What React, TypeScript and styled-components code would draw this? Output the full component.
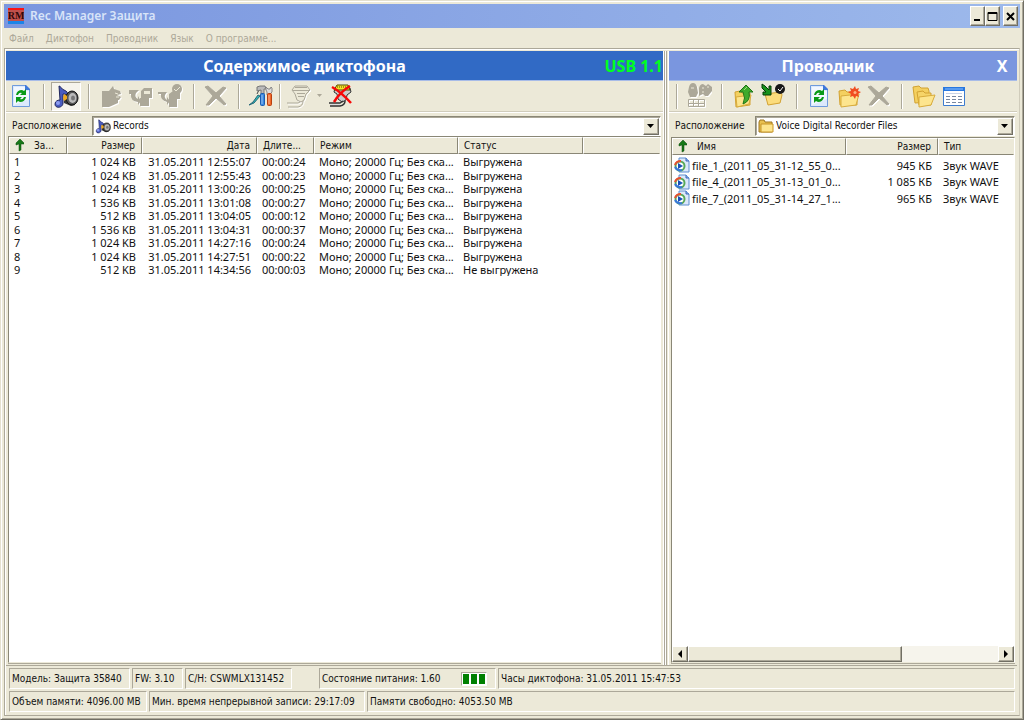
import React from "react";
import styled, { createGlobalStyle, css } from "styled-components";

const face = "#ece9d8";
const shadow = "#aca899";
const dark = "#8a8776";
const ui = '"DejaVu Sans Condensed", "DejaVu Sans", sans-serif';
const heading = '"Noto Sans", sans-serif';

const GlobalStyle = createGlobalStyle`
  *, *::before, *::after { box-sizing: border-box; }
  body { margin: 0; background: ${face}; }
  button, select { font: inherit; color: inherit; margin: 0; padding: 0; border: 0; background: none; }
`;

const raised = css`
  border: 1px solid;
  border-color: #fff #716f64 #716f64 #fff;
  box-shadow: inset -1px -1px 0 ${shadow};
  background: ${face};
`;

const Window = styled.main`
  min-height: 100vh;
  display: flex;
  flex-direction: column;
  background: ${face};
  border: 1px solid;
  border-color: #e4e0cf #716f64 #716f64 #e4e0cf;
  box-shadow: inset 1px 1px 0 #fff, inset -1px -1px 0 ${shadow};
  padding: 3px;
  font: 10px/14px ${ui};
  color: #111;
`;

const TitleBar = styled.header`
  height: 24px;
  flex: none;
  display: flex;
  align-items: center;
  padding: 0 2px 0 4px;
  background: linear-gradient(90deg, #7a96df, #9db9eb);
`;

const Title = styled.h1`
  flex: 1;
  margin: 0 0 0 6px;
  font: 600 12px/20px ${heading};
  color: #d8e4f8;
`;

const WinButton = styled.button<{ $gap?: boolean }>`
  ${raised}
  width: 15px;
  height: 20px;
  margin-left: ${(p) => (p.$gap ? 3 : 0)}px;
  display: grid;
  place-items: center;
  color: #000;
`;

const MenuBar = styled.nav`
  height: 20px;
  flex: none;
  display: flex;
  align-items: center;
  gap: 12px;
  padding: 2px 5px 0;
`;

const MenuItem = styled.button`
  color: ${shadow};
`;

const Body = styled.div`
  flex: 1;
  display: flex;
  flex-direction: column;
  border: 1px solid ${shadow};
  border-right-color: #d0ccbb;
  box-shadow: inset 1px 1px 0 #fff;
  padding: 2px 2px 1px 1px;
`;

const Panes = styled.div`
  flex: 1;
  display: grid;
  grid-template-columns: minmax(0, 657fr) 6px minmax(0, 348fr);
`;

const Splitter = styled.div`
  border: solid #fff;
  border-width: 0 1px;
  background: linear-gradient(90deg, ${shadow} 0 1px, #fff 1px 2px, ${shadow} 2px 3px, ${face} 3px);
`;

const Pane = styled.section`
  display: flex;
  flex-direction: column;
  min-width: 0;
`;

const PaneHeader = styled.div<{ $active?: boolean }>`
  height: 30px;
  flex: none;
  display: grid;
  grid-template-columns: 1fr ${(p) => (p.$active ? 60 : 30)}px;
  align-items: center;
  border-bottom: 1px solid #a8bce8;
  background: ${(p) => (p.$active ? "#316ac5" : "#7a96df")};
  color: #fff;
  font: 700 16px/20px ${heading};
`;

const PaneTitle = styled.h2`
  margin: 0;
  font: inherit;
  text-align: center;
`;

const UsbMode = styled.span`
  justify-self: end;
  white-space: nowrap;
  color: #00ff21;
`;

const PaneClose = styled.button`
  justify-self: center;
`;

const Toolbar = styled.div`
  height: 31px;
  flex: none;
  display: flex;
  align-items: center;
  border-bottom: 1px solid #d0ccbb;
`;

const ToolButton = styled.button<{ $pressed?: boolean; $narrow?: boolean }>`
  width: ${(p) => (p.$narrow ? 12 : 30)}px;
  height: 29px;
  flex: none;
  display: grid;
  place-items: center;
  ${(p) =>
    p.$pressed &&
    css`
      border: 1px solid;
      border-color: ${shadow} #fff #fff ${shadow};
      background: #f6f4ec;
    `}
`;

const Divider = styled.span<{ $narrow?: boolean }>`
  width: 2px;
  height: 25px;
  flex: none;
  margin: 0 ${(p) => (p.$narrow ? 3 : 6)}px 0 ${(p) => (p.$narrow ? 3 : 7)}px;
  border-left: 1px solid ${shadow};
  border-right: 1px solid #fff;
`;

const LocationRow = styled.div`
  height: 24px;
  flex: none;
  display: flex;
  align-items: center;
  padding: 2px 2px 0 6px;
  border-top: 1px solid #fff;
`;

const LocationLabel = styled.label`
  width: 80px;
  flex: none;
`;

const Combo = styled.div`
  flex: 1;
  min-width: 0;
  height: 20px;
  display: grid;
  grid-template-columns: 18px 1fr 16px;
  align-items: center;
  background: #fff;
  border: 1px solid;
  border-color: ${dark} #fff #fff ${dark};
  box-shadow: inset 1px 1px 0 ${shadow};
  padding: 1px;
`;

const ComboSelect = styled.select`
  grid-area: 1 / 1 / 2 / 4;
  appearance: none;
  width: 100%;
  height: 16px;
  padding-left: 19px;
  outline: none;
`;

const ComboIcon = styled.span`
  grid-area: 1 / 1;
  display: grid;
  place-items: center;
  pointer-events: none;
`;

const ComboArrow = styled.span`
  ${raised}
  grid-area: 1 / 3;
  width: 16px;
  height: 17px;
  display: grid;
  place-items: center;
  pointer-events: none;
`;

const ListBox = styled.div<{ $gap?: boolean }>`
  flex: 1;
  margin: ${(p) => (p.$gap ? 1 : 0)}px 2px 2px;
  display: flex;
  flex-direction: column;
  background: #fff;
  border: 1px solid;
  border-color: ${dark} #fff ${face} ${dark};
  box-shadow: 0 1px 0 ${shadow};
`;

const Grid = styled.table`
  width: 100%;
  table-layout: fixed;
  border-collapse: separate;
  border-spacing: 0;
`;

const Th = styled.th<{ $right?: boolean }>`
  height: 17px;
  padding: 0 6px 0 5px;
  background: ${face};
  border: 1px solid;
  border-color: #fff ${dark} ${dark} #fff;
  font-weight: 400;
  line-height: 14px;
  white-space: nowrap;
  text-align: ${(p) => (p.$right ? "right" : "left")};
  &:last-child { border-right-color: ${face}; }
`;

const SortedLabel = styled.span`
  display: flex;
  align-items: center;
  gap: 10px;
`;

const Rows = styled.tbody<{ $files?: boolean }>`
  font: 11px/13px ${heading};
  &::before {
    content: "";
    display: block;
    height: ${(p) => (p.$files ? 2 : 1)}px;
  }
  td { height: ${(p) => (p.$files ? 16 : 13)}px; }
  tr:nth-child(even) td { height: ${(p) => (p.$files ? 17 : 14)}px; }
`;

const Td = styled.td<{ $right?: boolean }>`
  padding: 0 6px 0 5px;
  white-space: nowrap;
  overflow: hidden;
  text-align: ${(p) => (p.$right ? "right" : "left")};
`;

const FileCell = styled(Td)`
  padding: 0 0 0 2px;
`;

const FileName = styled.span`
  display: flex;
  align-items: center;
  gap: 2px;
  height: 16px;
`;

const ScrollBar = styled.div`
  height: 16px;
  margin-top: auto;
  display: flex;
  background: #f6f4ec;
`;

const ScrollButton = styled.button`
  ${raised}
  width: 16px;
  flex: none;
  display: grid;
  place-items: center;
`;

const ScrollTrack = styled.div`
  flex: 1;
  display: flex;
`;

const ScrollThumb = styled.div`
  ${raised}
  width: 69%;
`;

const StatusBar = styled.footer`
  display: flex;
  flex-direction: column;
  gap: 2px;
  border-top: 1px solid ${shadow};
  padding: 2px 2px 2px 3px;
`;

const StatusRow = styled.div`
  display: flex;
  gap: 2px;
  height: 21px;
`;

const StatusCell = styled.div<{ $w?: number; $after?: number }>`
  ${(p) => (p.$w ? `min-width: ${p.$w}px;` : "flex: 1;")}
  margin-right: ${(p) => p.$after ?? 0}px;
  display: flex;
  align-items: center;
  gap: 20px;
  padding: 0 2px;
  white-space: nowrap;
  border: 1px solid;
  border-color: ${shadow} #fff #fff ${shadow};
`;

const Battery = styled.span`
  display: flex;
  gap: 2px;
  padding: 1px;
  background: #fff;
  border: 1px solid;
  border-color: ${shadow} #fff #fff ${shadow};
`;

const BatteryBar = styled.i`
  width: 6px;
  height: 10px;
  background: #008000;
`;

const Svg = ({ children, size = 26 }: { children: React.ReactNode; size?: number }) => (
  <svg width={size} height={size} viewBox="0 0 26 26" aria-hidden="true">
    {children}
  </svg>
);

const Refresh = () => (
  <Svg>
    <path d="M4.500 2.500h13l4 4v17h-17z" fill="#dce9fc" stroke="#6f9bdc" />
    <path d="M6 4h11v4h4v8L6 22z" fill="#f2f7ff" />
    <path d="M17 2h1l4 4v1h-5z" fill="#3f78dc" />
    <path d="M8 12q1-5 6-5l2 1 2-2v6h-6l2-2q-3-1-4 2z" fill="#0a9a18" />
    <path d="M18 14q-1 5-6 5l-2-1-2 2v-6h6l-2 2q3 1 4-2z" fill="#0a9a18" />
  </Svg>
);

const Recorder = ({ size = 26 }: { size?: number }) => (
  <Svg size={size}>
    <path d="M6 3c2 0 2 3 5 4s4 3 4 6c-2-2-4-2-5-2v9c0 5-8 6-8 1 0-3 3-4 5-4z" fill="#4a5cc0" stroke="#20265c" />
    <ellipse cx="5" cy="20" rx="2" ry="2" fill="#8d9cf0" />
    <path d="M11 12l7-3 4 0v13l-4 1-7-3z" fill="#383838" />
    <ellipse cx="19" cy="15" rx="6" ry="7" fill="#555" stroke="#111" />
    <ellipse cx="19.500" cy="15" rx="4" ry="5" fill="#bbb" />
    <ellipse cx="20" cy="15" rx="2" ry="2.500" fill="#777" />
    <path d="M11 11l3 2v3l-3 2-1-3z" fill="#f0a820" />
  </Svg>
);

const gray = "#aca899";

const Emboss = ({ children }: { children: React.ReactNode }) => (
  <Svg>
    <g transform="translate(1 1)" fill="#fff" stroke="#fff">{children}</g>
    <g fill={gray} stroke={gray}>{children}</g>
  </Svg>
);

const Unload = () => (
  <Emboss>
    <path d="M4 8h7l4-5 1 3 6 2 1 3-4 1 4 2-2 3h-1v3l-9 4H4z" strokeWidth="0" />
    <path d="M17 10l3 1M18 14h3" fill="none" stroke={face} />
  </Emboss>
);

const UnloadTo = () => (
  <Emboss>
    <path d="M1 7h10l-3 3q-2 4 2 6v-3l3 5-3 4v-3Q2 18 3 11H1zM13 8l3-3h8v10h-3v8h-9v-8h1z" strokeWidth="0" />
    <path d="M16 8h6v3h-6z" fill={face} stroke="none" />
  </Emboss>
);

const UnloadChecked = () => (
  <Emboss>
    <path d="M0 9h9l-2 3q-1 3 2 5v-3l3 4-3 4v-3q-7-2-6-8H0zM11 11l4-3h7v8h-3v8h-8z" strokeWidth="0" />
    <circle cx="19" cy="6" r="5" strokeWidth="0" />
    <path d="M16 6l2 2 4-4" fill="none" stroke={face} />
  </Emboss>
);

const Cross = () => (
  <Emboss>
    <path d="M2 4l3-1 8 7 7-6 3 1-7 8 7 8-2 1-8-7-7 7H3l7-9z" strokeWidth="1" />
  </Emboss>
);

const Tools = () => (
  <Svg>
    <path d="M1 22l4-3 5-7 2 1-6 7z" fill="#30b8b8" stroke="#286878" />
    <path d="M9 11l2-4" stroke="#444" />
    <path d="M9 4l3-1h5l1 3h-2v5h-3V7l-4 1z" fill="#bbb" stroke="#777" />
    <path d="M18 4l2 2h2l1-2 1 1v4l-2 2v1h-3V9l-1-2z" fill="#ddd" stroke="#888" />
    <rect x="12.500" y="10.500" width="4" height="12" rx="1" fill="#3888e0" stroke="#1c5cb0" />
    <rect x="19.500" y="10.500" width="4" height="12" rx="1" fill="#f06828" stroke="#b84010" />
    <path d="M14 12v9M21 12v9" stroke="#fff" strokeOpacity=".5" />
  </Svg>
);

const PlugShape = () => (
  <>
    <path d="M9 3h12l3 4-4 4-2 6-3 2-4-2-2-6-3-4z" fill={face} strokeWidth="1" />
    <path d="M9 4.500h12M7 7.500h16M11 10.500h8M12 13.500h6" fill="none" strokeWidth="1" />
    <path d="M14 19l-2 1H1M17 18q0 5-5 6H2" fill="none" strokeWidth="1" />
  </>
);

const PlugOff = () => (
  <Svg>
    <g transform="translate(1 1)" stroke="#fff"><PlugShape /></g>
    <g stroke={gray}><PlugShape /></g>
  </Svg>
);

const PlugRemove = () => (
  <Svg>
    <path d="M7 5h15l1 4-4 3-1 5-4 2-4-3-1-5-3-2z" fill="#ccc" stroke="#333" />
    <path d="M9 2h11l2 5H6z" fill="#f4e428" stroke="#554c00" />
    <path d="M9 4h11" stroke="#554c00" strokeDasharray="1 1" />
    <path d="M15 18l-3 2H1M17 18q0 4-5 5H2" fill="none" stroke="#333" strokeWidth="1.500" />
    <path d="M2 21.500h10" stroke="#ddd" />
    <path d="M4 4q9 5 19 16M22 3Q12 9 6 19" fill="none" stroke="#f80808" strokeWidth="2.500" />
  </Svg>
);

const Search = () => (
  <Emboss>
    <path d="M3 4q1-4 4-4t4 4l1 6-2 4H4L2 9zM13 5q1-4 4-4l3 2 2-2 4 3v4l-4 5h-3l-2-2-4 2z" strokeWidth="0" />
    <path d="M5 5h3M16 5h2M21 4h2M16 9h2" fill="none" stroke={face} />
    <path d="M2.500 16.500h16v7h-16zM2 20.500h17M7.500 16v7M12.500 16v7" fill="none" />
  </Emboss>
);

const folderBack = "#f4d060";
const FolderShape = () => (
  <>
    <path d="M3 8l6-1 2 2h9l1 3v10H4z" fill={folderBack} stroke="#d2a232" />
    <path d="M5 13l18-2-3 11-15 2z" fill="#fde58e" stroke="#d8ac3c" />
  </>
);

const FolderUp = () => (
  <Svg>
    <path d="M4 9l5-1 2 2h8v12l-14 2z" fill={folderBack} stroke="#d2a232" />
    <path d="M5 14l15-2-2 9-12 3z" fill="#fde58e" stroke="#d8ac3c" />
    <path d="M8 9l7-7 7 7h-4q2 9-6 12 3-6 0-12z" fill="#3faa2c" stroke="#1c7416" />
    <path d="M13 7l3-3" stroke="#9be078" />
  </Svg>
);

const FolderMark = () => (
  <Svg>
    <path d="M4 11l16-2 1 3-2 8-12 2z" fill="#fbdc7c" stroke="#d2a232" />
    <path d="M1 1l3 2 4 4V3h2v9H2V9h3L1 5z" fill="#18921c" stroke="#063c06" />
    <circle cx="19" cy="6" r="5" fill="#181818" />
    <path d="M17 6l2 2 3-4" fill="none" stroke="#fff" />
  </Svg>
);

const FolderNew = () => (
  <Svg>
    <FolderShape />
    <path d="M19 3l1 3 3-1-1 3 3 1-3 2 1 3-3-1-1 3-2-3-3 1 1-3-3-2 3-1-1-3 3 1z" fill="#f04c20" />
    <circle cx="19" cy="9.500" r="1.500" fill="#ffb080" />
  </Svg>
);

const FolderOpen = () => (
  <Svg>
    <path d="M2 4l6-1 2 2h7l1 3v11l-14 1z" fill={folderBack} stroke="#d2a232" />
    <path d="M6 9l6-1 2 2h6v12H8z" fill="#f6d468" stroke="#d2a232" />
    <path d="M8 14l16-2-4 10-12 2z" fill="#fde58e" stroke="#d8ac3c" />
  </Svg>
);

const ListView = () => (
  <Svg>
    <path d="M2.500 4.500h21v18h-21z" fill="#fff" stroke="#3c7cd0" />
    <path d="M2 4h22v4H2z" fill="#2878e0" />
    <path d="M4 6h18" stroke="#8cc0ff" />
    <path d="M5 10.500h16" stroke="#c8d4e8" />
    <path d="M5 13.500h4M11 13.500h4M17 13.500h4M5 16.500h4M11 16.500h4M17 16.500h4M5 19.500h4M11 19.500h4M17 19.500h4" stroke="#7888a0" />
  </Svg>
);

const Folder = () => (
  <svg width="16" height="16" viewBox="0 0 16 16" aria-hidden="true">
    <path d="M1 4l1-2h4l1 2h7v10H1z" fill="#e8c050" stroke="#9c7420" />
    <path d="M3 6h12v8H3z" fill="#fde58e" stroke="#c89628" />
  </svg>
);

const WaveFile = () => (
  <svg width="16" height="16" viewBox="0 0 16 16" aria-hidden="true">
    <path d="M5 1h7l3 3v11H5z" fill="#dce8fa" stroke="#5f8fd0" />
    <path d="M12 1v3h3" fill="#8fb4ec" stroke="#3c68b8" />
    <circle cx="6" cy="9" r="4.500" fill="#fff" stroke="#58a858" strokeWidth="2" />
    <path d="M1 8q1-4 6-4" fill="none" stroke="#e85030" strokeWidth="2" />
    <path d="M1 10q2 4 7 3" fill="none" stroke="#3878d8" strokeWidth="2" />
    <path d="M4 6l5 3-5 3z" fill="#1850b8" />
  </svg>
);

const SortArrow = () => (
  <svg width="9" height="13" viewBox="0 0 9 13" aria-hidden="true">
    <path d="M5 0l4 4v1H6v6l-2 1V5L1 6V4z" fill="#187818" stroke="#084808" strokeWidth=".5" />
  </svg>
);

const Caret = ({ d, color = "#000" }: { d: string; color?: string }) => (
  <svg width="8" height="8" viewBox="0 0 8 8" aria-hidden="true">
    <path d={d} fill={color} />
  </svg>
);

const down = "M0 2h7L3.500 6z";

const Logo = () => (
  <svg width="16" height="16" viewBox="0 0 16 16" aria-hidden="true">
    <path fill="#c0504c" d="M0 2h16v11H0z" />
    <path fill="#f81414" d="M0 0h16v2H0z" />
    <path fill="#1c84e8" d="M0 13h16v3H0z" />
    <text x="8" y="11" fontSize="10" fontWeight="700" fontFamily="Liberation Serif, serif" textAnchor="middle" fill="#300808">RM</text>
  </svg>
);

const records = [
  ["1", "1 024 KB", "31.05.2011 12:55:07", "00:00:24", "Выгружена"],
  ["2", "1 024 KB", "31.05.2011 12:55:43", "00:00:23", "Выгружена"],
  ["3", "1 024 KB", "31.05.2011 13:00:26", "00:00:25", "Выгружена"],
  ["4", "1 536 KB", "31.05.2011 13:01:08", "00:00:27", "Выгружена"],
  ["5", "512 KB", "31.05.2011 13:04:05", "00:00:12", "Выгружена"],
  ["6", "1 536 KB", "31.05.2011 13:04:31", "00:00:37", "Выгружена"],
  ["7", "1 024 KB", "31.05.2011 14:27:16", "00:00:24", "Выгружена"],
  ["8", "1 024 KB", "31.05.2011 14:27:51", "00:00:22", "Выгружена"],
  ["9", "512 KB", "31.05.2011 14:34:56", "00:00:03", "Не выгружена"],
];

const files = [
  ["file_1_(2011_05_31-12_55_0...", "945 КБ"],
  ["file_4_(2011_05_31-13_01_0...", "1 085 КБ"],
  ["file_7_(2011_05_31-14_27_1...", "965 КБ"],
];

const Cols = ({ widths }: { widths: number[] }) => (
  <colgroup>
    {widths.map((w, i) => (
      <col key={i} width={w || undefined} />
    ))}
  </colgroup>
);

export default function App() {
  return (
    <>
      <GlobalStyle />
      <Window>
        <TitleBar>
          <Logo />
          <Title>Rec Manager Защита</Title>
          <WinButton aria-label="Свернуть">
            <svg width="9" height="11"><path d="M1 8h6v2H1z" /></svg>
          </WinButton>
          <WinButton aria-label="Развернуть">
            <svg width="11" height="11"><path d="M1 1.500h9v8H1z" fill="none" stroke="#000" /><path d="M1 1h9v2H1z" /></svg>
          </WinButton>
          <WinButton aria-label="Закрыть" $gap>
            <svg width="9" height="9"><path d="M1 1l7 7M8 1l-7 7" stroke="#000" strokeWidth="2" /></svg>
          </WinButton>
        </TitleBar>
        <MenuBar>
          {["Файл", "Диктофон", "Проводник", "Язык", "О программе..."].map((m) => (
            <MenuItem key={m} disabled>{m}</MenuItem>
          ))}
        </MenuBar>
        <Body>
          <Panes>
            <Pane>
              <PaneHeader $active>
                <PaneTitle>Содержимое диктофона</PaneTitle>
                <UsbMode>USB 1.1</UsbMode>
              </PaneHeader>
              <Toolbar>
                <ToolButton aria-label="Обновить"><Refresh /></ToolButton>
                <Divider />
                <ToolButton aria-label="Диктофон" $pressed><Recorder /></ToolButton>
                <Divider />
                <ToolButton aria-label="Выгрузить" disabled><Unload /></ToolButton>
                <ToolButton aria-label="Выгрузить в папку" disabled><UnloadTo /></ToolButton>
                <ToolButton aria-label="Выгрузить с проверкой" disabled><UnloadChecked /></ToolButton>
                <Divider />
                <ToolButton aria-label="Удалить" disabled><Cross /></ToolButton>
                <Divider />
                <ToolButton aria-label="Настройки"><Tools /></ToolButton>
                <Divider $narrow />
                <ToolButton aria-label="Подключить" disabled><PlugOff /></ToolButton>
                <ToolButton aria-label="Выбрать порт" disabled $narrow><Caret d="M1 2h5L3.500 5z" color={gray} /></ToolButton>
                <ToolButton aria-label="Отключить"><PlugRemove /></ToolButton>
              </Toolbar>
              <LocationRow>
                <LocationLabel htmlFor="recorder-path">Расположение</LocationLabel>
                <Combo>
                  <ComboSelect id="recorder-path"><option>Records</option></ComboSelect>
                  <ComboIcon><Recorder size={16} /></ComboIcon>
                  <ComboArrow><Caret d={down} /></ComboArrow>
                </Combo>
              </LocationRow>
              <ListBox>
                <Grid>
                  <Cols widths={[58, 75, 115, 57, 144, 125, 0]} />
                  <thead>
                    <tr>
                      <Th><SortedLabel><SortArrow />За...</SortedLabel></Th>
                      <Th $right>Размер</Th>
                      <Th $right>Дата</Th>
                      <Th>Длите...</Th>
                      <Th>Режим</Th>
                      <Th>Статус</Th>
                      <Th />
                    </tr>
                  </thead>
                  <Rows>
                    {records.map(([id, size, date, time, state]) => (
                      <tr key={id}>
                        <Td>{id}</Td>
                        <Td $right>{size}</Td>
                        <Td $right>{date}</Td>
                        <Td>{time}</Td>
                        <Td>Моно; 20000 Гц; Без ска...</Td>
                        <Td>{state}</Td>
                        <Td />
                      </tr>
                    ))}
                  </Rows>
                </Grid>
              </ListBox>
            </Pane>
            <Splitter />
            <Pane>
              <PaneHeader>
                <PaneTitle>Проводник</PaneTitle>
                <PaneClose aria-label="Закрыть проводник">X</PaneClose>
              </PaneHeader>
              <Toolbar>
                <Divider />
                <ToolButton aria-label="Поиск" disabled><Search /></ToolButton>
                <Divider />
                <ToolButton aria-label="На уровень вверх"><FolderUp /></ToolButton>
                <ToolButton aria-label="Папка выгрузки"><FolderMark /></ToolButton>
                <Divider />
                <ToolButton aria-label="Обновить"><Refresh /></ToolButton>
                <ToolButton aria-label="Новая папка"><FolderNew /></ToolButton>
                <ToolButton aria-label="Удалить" disabled><Cross /></ToolButton>
                <Divider />
                <ToolButton aria-label="Открыть папку"><FolderOpen /></ToolButton>
                <ToolButton aria-label="Вид"><ListView /></ToolButton>
              </Toolbar>
              <LocationRow>
                <LocationLabel htmlFor="folder-path">Расположение</LocationLabel>
                <Combo>
                  <ComboSelect id="folder-path"><option>Voice Digital Recorder Files</option></ComboSelect>
                  <ComboIcon><Folder /></ComboIcon>
                  <ComboArrow><Caret d={down} /></ComboArrow>
                </Combo>
              </LocationRow>
              <ListBox $gap>
                <Grid>
                  <Cols widths={[174, 92, 0]} />
                  <thead>
                    <tr>
                      <Th><SortedLabel><SortArrow />Имя</SortedLabel></Th>
                      <Th $right>Размер</Th>
                      <Th>Тип</Th>
                    </tr>
                  </thead>
                  <Rows $files>
                    {files.map(([name, size]) => (
                      <tr key={name}>
                        <FileCell><FileName><WaveFile />{name}</FileName></FileCell>
                        <Td $right>{size}</Td>
                        <Td>Звук WAVE</Td>
                      </tr>
                    ))}
                  </Rows>
                </Grid>
                <ScrollBar>
                  <ScrollButton aria-label="Влево"><Caret d="M6 0v8L2 4z" /></ScrollButton>
                  <ScrollTrack><ScrollThumb /></ScrollTrack>
                  <ScrollButton aria-label="Вправо"><Caret d="M2 0v8l4-4z" /></ScrollButton>
                </ScrollBar>
              </ListBox>
            </Pane>
          </Panes>
          <StatusBar>
            <StatusRow>
              <StatusCell $w={121}>Модель: Защита 35840</StatusCell>
              <StatusCell $w={51}>FW: 3.10</StatusCell>
              <StatusCell $w={107} $after={25}>С/Н: CSWMLX131452</StatusCell>
              <StatusCell $w={177}>
                Состояние питания: 1.60
                <Battery><BatteryBar /><BatteryBar /><BatteryBar /></Battery>
              </StatusCell>
              <StatusCell>Часы диктофона: 31.05.2011 15:47:53</StatusCell>
            </StatusRow>
            <StatusRow>
              <StatusCell $w={138}>Объем памяти: 4096.00 MB</StatusCell>
              <StatusCell $w={216}>Мин. время непрерывной записи: 29:17:09</StatusCell>
              <StatusCell>Памяти свободно: 4053.50 MB</StatusCell>
            </StatusRow>
          </StatusBar>
        </Body>
      </Window>
    </>
  );
}
